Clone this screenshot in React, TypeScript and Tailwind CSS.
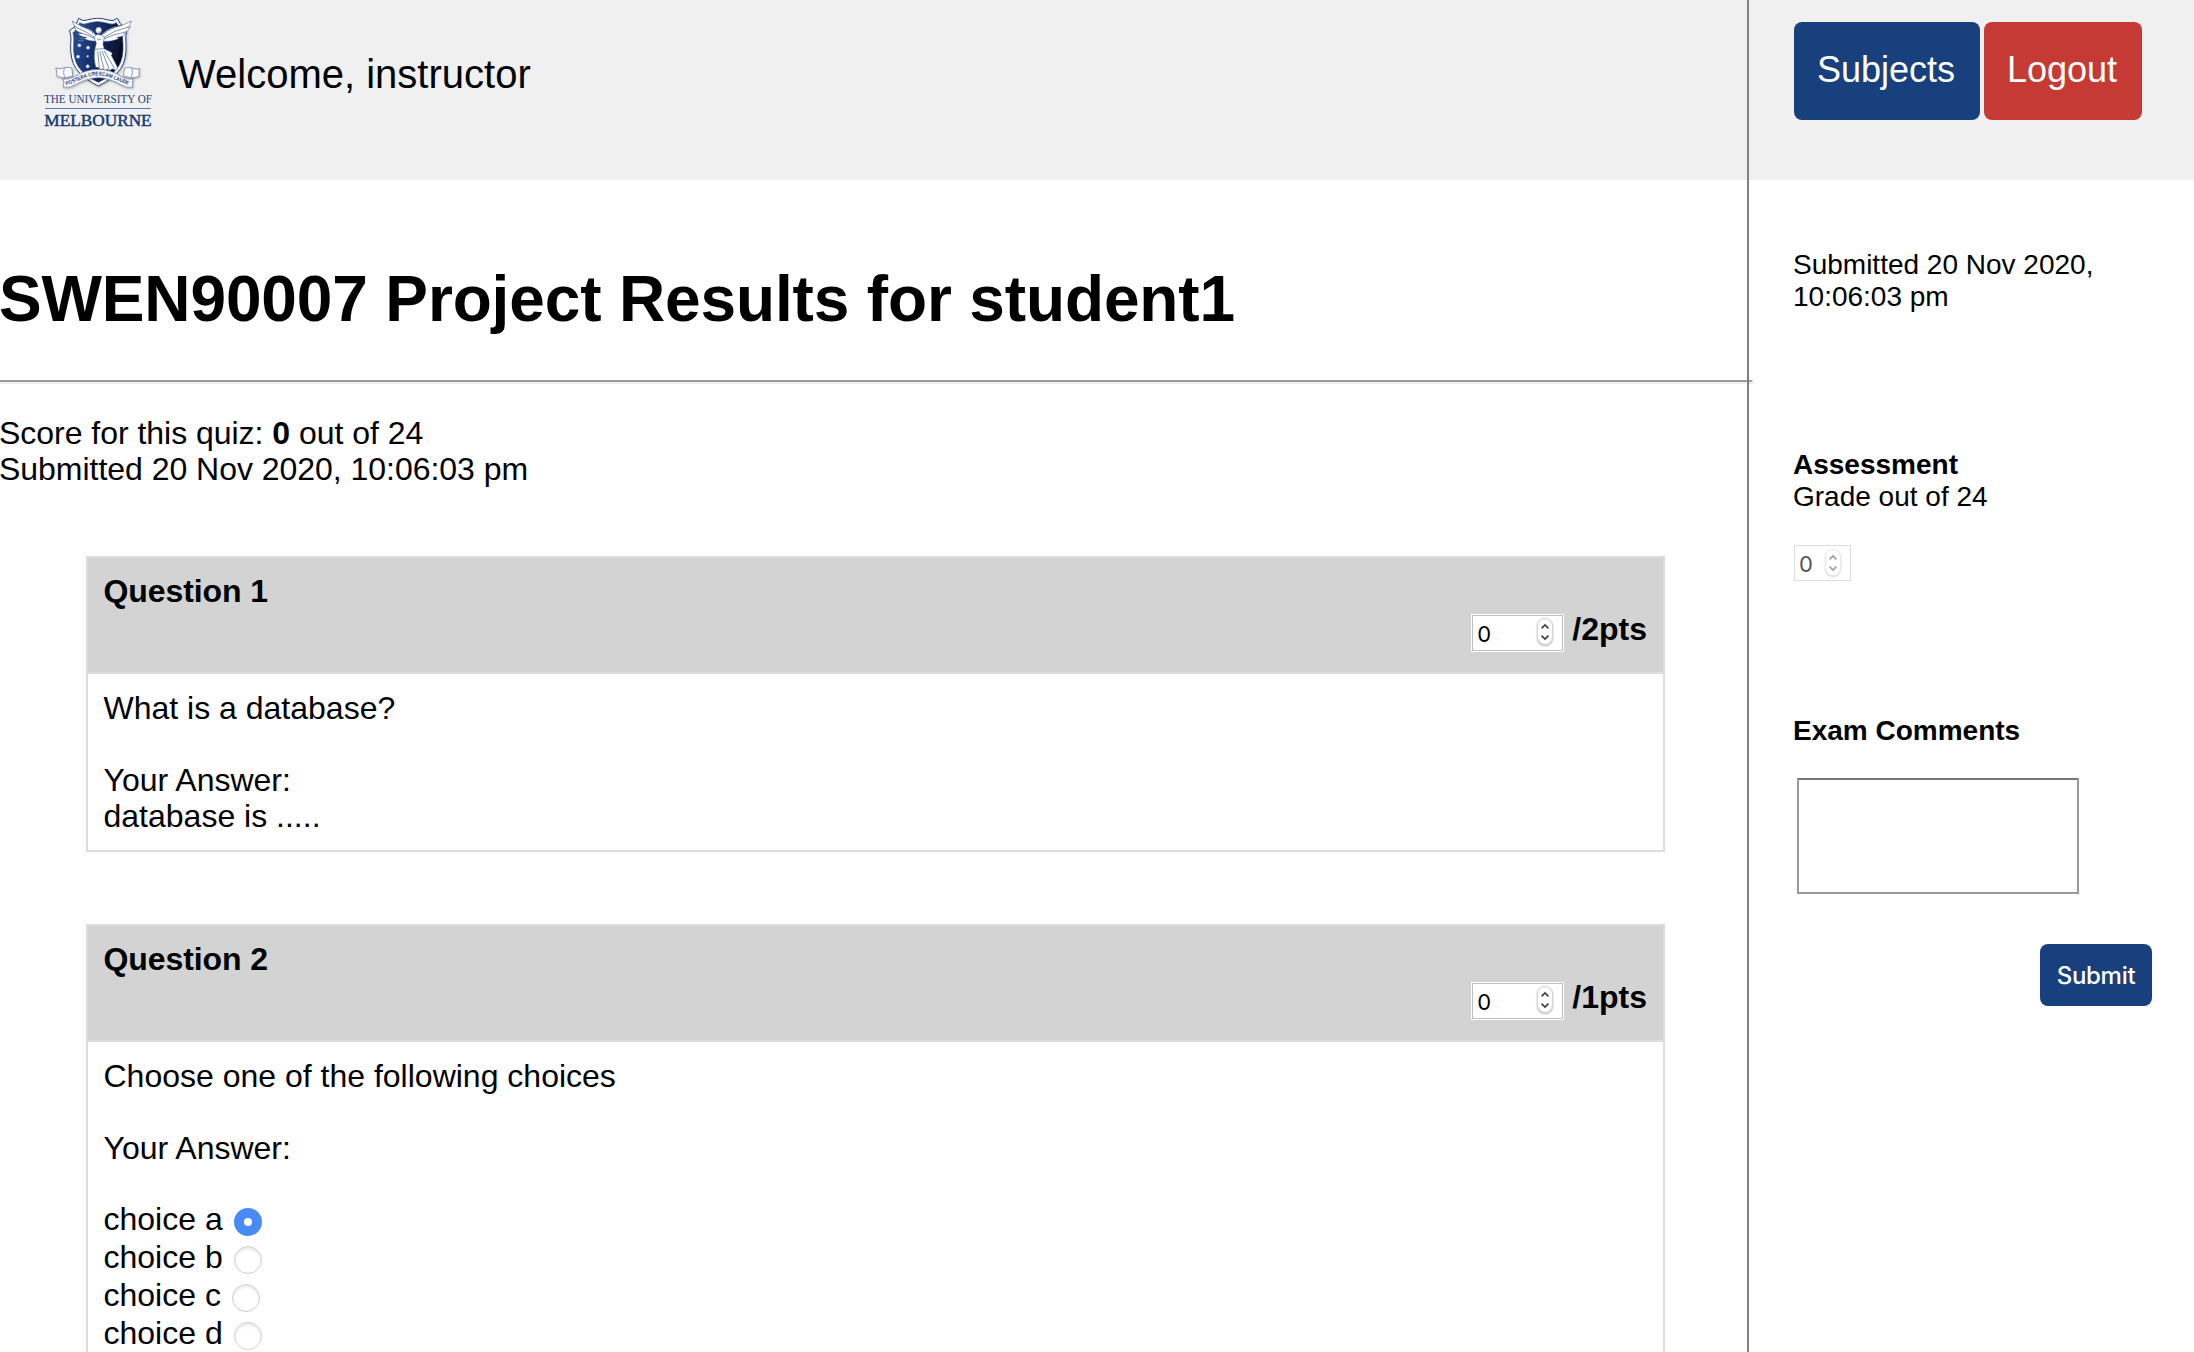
import React from "react";

function Crest() {
  return (
    <svg width="140" height="140" viewBox="0 0 420 420" className="shrink-0">
      <defs>
        <linearGradient id="shield" x1="0" y1="0" x2="1" y2="0.25">
          <stop offset="0" stopColor="#2a4f92" />
          <stop offset="0.5" stopColor="#16306a" />
          <stop offset="1" stopColor="#060f26" />
        </linearGradient>
        <filter id="soft" x="-20%" y="-20%" width="140%" height="140%">
          <feDropShadow dx="2" dy="3" stdDeviation="3" floodColor="#000" floodOpacity="0.3" />
        </filter>
        <path id="motto" d="M109 256 C140 247 170 226 203 226 C236 226 268 247 300 256" />
      </defs>
      <g filter="url(#soft)">
        <path
          d="M146 55 Q158 66 172 60 Q202 50 234 60 Q250 66 262 55 L270 70 Q278 82 291 86 Q285 104 288 134 Q290 178 272 206 Q250 236 205 258 Q160 236 138 206 Q120 178 122 134 Q125 106 118 92 Q134 84 140 70 Z"
          fill="#fff"
          stroke="#27457c"
          strokeWidth="3"
        />
        <path
          d="M149 68 Q160 76 174 70 Q202 60 232 70 Q248 76 259 68 Q268 84 280 92 Q276 110 279 134 Q281 174 265 200 Q246 227 205 247 Q164 227 145 200 Q129 174 131 134 Q133 110 129 98 Q143 88 149 68 Z"
          fill="url(#shield)"
          stroke="#27457c"
          strokeWidth="2"
        />
      </g>
      <g fill="#fff" stroke="#27457c" strokeWidth="1.5" strokeLinejoin="round">
        <path d="M200 108 Q190 90 164 82 Q142 74 127 63 Q128 76 142 84 Q136 85 131 82 Q138 96 156 100 Q148 102 142 99 Q152 112 170 112 Q166 116 160 115 Q174 124 198 124 Z" />
        <path d="M213 106 Q228 88 254 80 Q284 76 304 63 Q303 76 292 82 Q298 84 302 80 Q294 96 280 98 Q284 101 290 99 Q278 112 262 112 Q264 116 268 115 Q250 126 214 124 Z" />
        <path d="M192 112 Q196 105 203 103 Q214 103 223 112 L219 132 L223 148 L194 148 L199 130 Z" />
        <path d="M194 148 L222 146 Q236 152 246 158 Q248 162 244 166 Q252 182 262 200 Q264 210 256 211 Q244 202 240 213 Q232 204 226 212 Q218 202 212 209 Q206 200 197 202 Q190 174 194 148 Z" />
        <ellipse cx="206" cy="91" rx="9" ry="10" />
      </g>
      <g fill="none" stroke="#27457c" strokeWidth="1.8">
        <path d="M142 84 Q168 94 194 112 M156 100 Q174 104 194 116 M152 78 Q178 86 196 104 M292 82 Q254 90 222 112 M280 98 Q250 102 222 117 M276 76 Q240 84 218 104" />
        <path d="M203 154 L208 202 M210 154 Q214 182 222 206 M216 152 Q226 180 238 208 M222 152 Q236 176 254 206 M201 116 Q206 124 214 116 M204 96 Q208 99 212 94" />
        <path d="M148 112 q6 8 16 2 M144 120 q10 6 18 0" stroke="#8ea5cf" />
      </g>
      <g fill="#fff" stroke="#7f97c4" strokeWidth="2">
        <circle cx="148" cy="136" r="5" />
        <circle cx="174" cy="143" r="5" />
        <circle cx="144" cy="170" r="5" />
        <circle cx="173" cy="169" r="3" />
        <circle cx="173" cy="199" r="5" />
      </g>
      <g filter="url(#soft)" fill="#f8f9fb" stroke="#5d7297" strokeWidth="2" strokeLinejoin="round">
        <path d="M77 204 Q90 210 102 203 Q118 200 126 205 L128 228 L104 234 Q90 232 80 228 Q84 216 77 204 Z" />
        <path d="M329 206 Q318 210 306 204 Q292 200 284 205 L280 228 L304 234 Q318 232 328 229 Q324 216 329 206 Z" />
        <path d="M98 237 Q112 240 132 231 Q166 208 205 208 Q242 208 276 231 Q294 240 310 237 Q304 248 309 261 Q292 266 272 254 Q238 234 205 233 Q172 234 136 254 Q118 266 99 261 Q106 248 98 237 Z" />
        <path d="M104 234 Q98 214 103 204 M304 234 Q310 214 306 204" fill="none" />
      </g>
      <text fontFamily="Liberation Sans, sans-serif" fontSize="16" fontWeight="700" fill="#27457c">
        <textPath href="#motto" textLength="196" lengthAdjust="spacingAndGlyphs">
          POSTERA CRESCAM LAUDE
        </textPath>
      </text>
      <text
        x="42"
        y="309"
        fontFamily="Liberation Serif, serif"
        fontSize="37"
        fill="#21457c"
        textLength="324"
        lengthAdjust="spacingAndGlyphs"
      >
        THE UNIVERSITY OF
      </text>
      <rect x="45" y="324" width="318" height="3" fill="#5a7bab" />
      <text
        x="43"
        y="378"
        fontFamily="Liberation Serif, serif"
        fontSize="51"
        fill="#123a76"
        stroke="#123a76"
        strokeWidth="1.4"
        textLength="322"
        lengthAdjust="spacingAndGlyphs"
      >
        MELBOURNE
      </text>
    </svg>
  );
}

function Spinner() {
  return (
    <span className="flex h-[27px] w-4 items-center justify-center rounded-full border border-[#d4d4d4] bg-white shadow-[0_1px_2px_rgba(0,0,0,0.3)]">
      <svg width="10" height="18" viewBox="0 0 10 18" fill="none" stroke="#3c3c3c" strokeWidth="1.6" className="shrink-0">
        <path d="M1.6 5.4 L5 2 L8.4 5.4 M1.6 12.6 L5 16 L8.4 12.6" />
      </svg>
    </span>
  );
}

function PointsInput() {
  return (
    <div className="mt-[3px] flex h-[38px] w-[93px] border border-white bg-[#bdbdbd] p-px">
      <div className="flex flex-1 items-start justify-between bg-white pr-[9px] pl-[4px]">
        <span className="mt-[5px] font-['Inter',sans-serif] text-[22px] leading-[26px] font-normal">0</span>
        <span className="mt-[2px]">
          <Spinner />
        </span>
      </div>
    </div>
  );
}

function Question({ n, points, children }: { n: number; points: number; children: React.ReactNode }) {
  return (
    <section className="mr-[82px] mb-[72px] ml-[86px] border-2 border-[#dddddd]">
      <div className="h-[116px] border-b-2 border-[#dddddd] bg-[#d3d3d3] pt-[15px] pr-4 pl-[15.5px] font-bold">
        <h2 className="tracking-[-0.1px]">Question {n}</h2>
        <div className="flex items-start justify-end gap-2">
          <div className="mt-[2px]">
            <PointsInput />
          </div>
          <span className="mt-[2px]">/{points}pts</span>
        </div>
      </div>
      <div className="py-4 pr-4 pl-[15.5px]">{children}</div>
    </section>
  );
}

function Choice({ label, checked }: { label: string; checked?: boolean }) {
  return (
    <div className="flex h-[38px]">
      <span className="-mt-px">choice {label}</span>
      {checked ? (
        <span className="mt-[6px] ml-[11px] flex size-7 items-center justify-center rounded-full bg-[#4a8af6]">
          <span className="size-2 rounded-full bg-white" />
        </span>
      ) : (
        <span className="mt-[6px] ml-[11px] size-7 rounded-full border border-[#cfcfcf] bg-white shadow-[inset_0_2px_3px_rgba(0,0,0,0.1)]" />
      )}
    </div>
  );
}

export default function App() {
  return (
    <div className="flex h-[1352px] w-[2194px] overflow-hidden bg-white font-['Liberation_Sans',Arial,sans-serif] text-[32px] leading-[36px] text-black">
      <main className="w-[1747px] shrink-0">
        <header className="flex h-[180px] bg-[#f0f0f0] pl-[30px]">
          <Crest />
          <p className="mt-[51px] ml-[8px] text-[40px] leading-[46px]">Welcome, instructor</p>
        </header>
        <h1 className="-ml-px h-[200px] pt-[82px] text-[64px] leading-[74px] font-bold tracking-[-0.14px]">
          SWEN90007 Project Results for student1
        </h1>
        <div className="h-1 w-[1753px] border-t-2 border-r-2 border-b-2 border-t-[#9a9a9a] border-r-[#eeeeee] border-b-[#eeeeee]" />
        <div className="-ml-px h-[172px] pt-[31px] tracking-[-0.03px]">
          <p>
            Score for this quiz: <b>0</b> out of 24
          </p>
          <p>Submitted 20 Nov 2020, 10:06:03 pm</p>
        </div>
        <Question n={1} points={2}>
          <p className="mb-9">What is a database?</p>
          <p>Your Answer:</p>
          <p>database is .....</p>
        </Question>
        <Question n={2} points={1}>
          <p className="mb-9">Choose one of the following choices</p>
          <p className="mb-9">Your Answer:</p>
          <Choice label="a" checked />
          <Choice label="b" />
          <Choice label="c" />
          <Choice label="d" />
        </Question>
      </main>
      <aside className="flex flex-1 flex-col border-l-2 border-[#808080] text-[28px] leading-8">
        <nav className="flex h-[180px] gap-1 bg-[#f0f0f0] pt-[22px] pl-[45px] text-[36px] text-white">
          <button className="h-[98px] w-[186px] rounded-lg bg-[#18407d] pr-[2px] pb-[3px]">Subjects</button>
          <button className="h-[98px] w-[158px] rounded-lg bg-[#c53a34] pr-[2px] pb-[3px]">Logout</button>
        </nav>
        <div className="flex flex-col pr-[42px] pl-[45px]">
          <p className="mt-[69px] -ml-px">
            Submitted 20 Nov 2020,
            <br />
            10:06:03 pm
          </p>
          <p className="mt-[136px] -ml-px font-bold">Assessment</p>
          <p className="-ml-px">Grade out of 24</p>
          <div className="mt-[32px] flex h-9 w-[57px] items-start justify-between border border-[#dcdcdc] pr-[9px] pl-[4px]">
            <span className="mt-[5px] font-['Inter',sans-serif] text-[22px] leading-[26px] text-[#545454]">0</span>
            <span className="mt-[3px] opacity-50">
              <Spinner />
            </span>
          </div>
          <p className="mt-[134px] -ml-px font-bold">Exam Comments</p>
          <textarea className="mt-[31px] ml-[3px] h-[116px] w-[282px] resize-none border-2 border-[#9a9a9a] border-t-[#767676]" />
          <button className="mt-[50px] h-[62px] w-28 self-end rounded-lg bg-[#18407d] pt-px font-['Inter',sans-serif] text-[24px] font-medium tracking-[-0.3px] text-white">
            Submit
          </button>
        </div>
      </aside>
    </div>
  );
}
